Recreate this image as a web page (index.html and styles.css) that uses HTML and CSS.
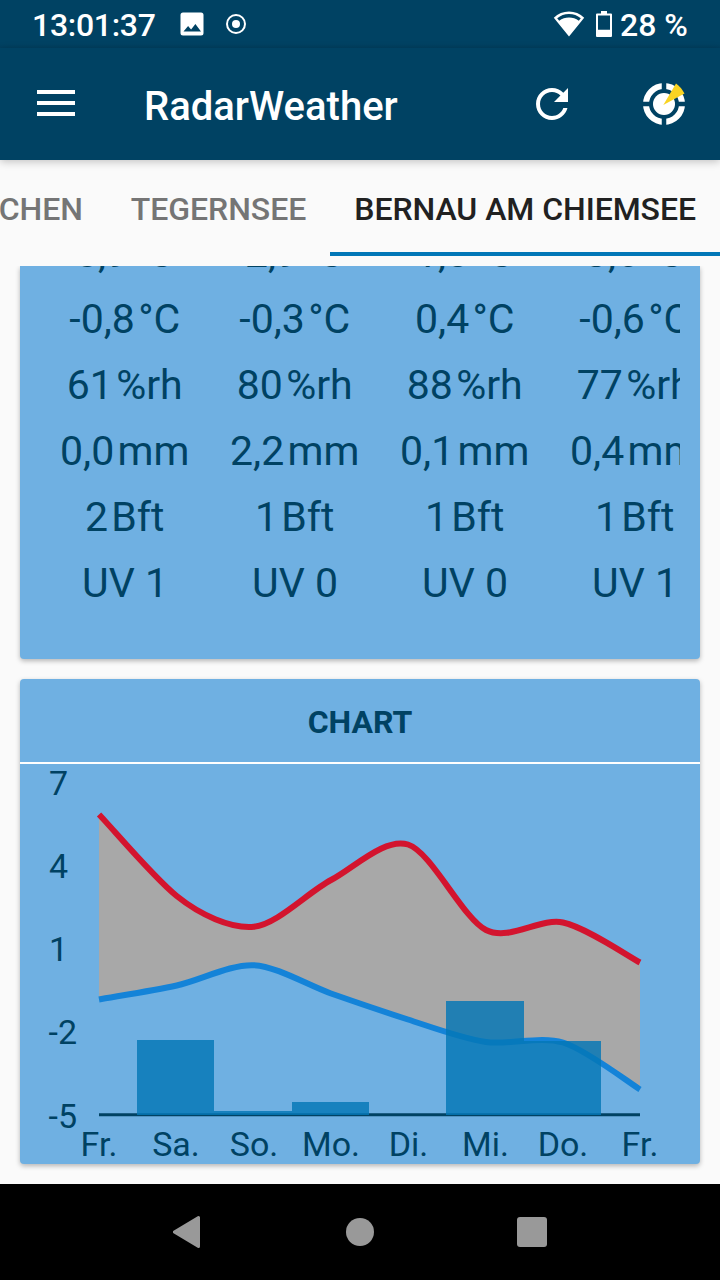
FILE: index.html
```html
<!DOCTYPE html>
<html lang="de">
<head>
<meta charset="utf-8">
<title>RadarWeather</title>
<link rel="stylesheet" href="styles.css">
</head>
<body>
<div class="screen">
  <header class="statusbar">
    <span class="clock">13:01:37</span>
    <svg class="status-image" width="24" height="24" viewBox="0 0 24 24"><path fill="#fff" fill-rule="evenodd" d="M3 .5h18A2.500 2.500 0 0 1 23.500 3v18a2.500 2.500 0 0 1-2.500 2.500H3A2.500 2.500 0 0 1 .5 21V3A2.500 2.500 0 0 1 3 .5zM3.500 19.500h17.500l-5.600-7.500-4.300 5.600-3-3.700z"/></svg>
    <svg class="status-record" width="22" height="22" viewBox="0 0 22 22"><circle cx="11" cy="11" r="9" fill="none" stroke="#fff" stroke-width="2"/><circle cx="11" cy="11" r="4" fill="#fff"/></svg>
    <svg class="status-wifi" width="32" height="26" viewBox="0 0 32 26"><path fill="#fff" fill-rule="evenodd" d="M16 25.500L.8 6.800C5 2.700 10.300.5 16 .5s11 2.200 15.200 6.300zM4.200 7.300l2 2.400a16.500 16.500 0 0 1 19.600 0l2-2.400a18.500 18.500 0 0 0-23.600 0z"/></svg>
    <svg class="status-battery" width="16" height="26" viewBox="0 0 16 26"><path fill="#fff" fill-rule="evenodd" d="M5 0h6v2.500h4a1 1 0 0 1 1 1V25a1 1 0 0 1-1 1H1a1 1 0 0 1-1-1V3.500a1 1 0 0 1 1-1h4zM2 4.600v14.200h12V4.600z"/></svg>
    <span class="percent">28 %</span>
  </header>
  <div class="appbar">
    <svg class="menu" width="38" height="28" viewBox="0 0 38 28"><path stroke="#fff" stroke-width="4" d="M0 3h38M0 14h38M0 25h38"/></svg>
    <h1 class="title">RadarWeather</h1>
    <svg class="refresh" width="32" height="32" viewBox="4 4 16 16"><path fill="#fff" d="M17.650 6.350C16.200 4.900 14.210 4 12 4c-4.420 0-7.990 3.580-7.990 8s3.570 8 7.990 8c3.730 0 6.840-2.550 7.730-6h-2.080c-.82 2.330-3.040 4-5.650 4-3.310 0-6-2.690-6-6s2.690-6 6-6c1.660 0 3.140.69 4.220 1.780L13 11h7V4l-2.350 2.350z"/></svg>
    <svg class="radar" width="42" height="42" viewBox="0 0 42 42"><circle cx="21" cy="21" r="11" fill="#fff"/><circle cx="21" cy="21" r="18" fill="none" stroke="#fff" stroke-width="6"/><path stroke="#004263" stroke-width="4.500" d="M21 0v9M21 33v9M0 21h9M33 21h9"/><path fill="#f9d423" d="M20.300 22L33 .5Q38 4 41.500 10.500z"/></svg>
  </div>
  <nav class="tabs">
    <span class="tab">MÜNCHEN</span>
    <span class="tab">TEGERNSEE</span>
    <span class="tab tab-active">BERNAU AM CHIEMSEE</span>
  </nav>
  <main class="content">
    <section class="card forecast">
      <div class="days">
        <div class="day"><span>5,9<i>°C</i></span><span>-0,8<i>°C</i></span><span>61<i>%rh</i></span><span>0,0<i>mm</i></span><span>2<i>Bft</i></span><span>UV 1</span></div>
        <div class="day"><span>2,9<i>°C</i></span><span>-0,3<i>°C</i></span><span>80<i>%rh</i></span><span>2,2<i>mm</i></span><span>1<i>Bft</i></span><span>UV 0</span></div>
        <div class="day"><span>1,8<i>°C</i></span><span>0,4<i>°C</i></span><span>88<i>%rh</i></span><span>0,1<i>mm</i></span><span>1<i>Bft</i></span><span>UV 0</span></div>
        <div class="day"><span>3,6<i>°C</i></span><span>-0,6<i>°C</i></span><span>77<i>%rh</i></span><span>0,4<i>mm</i></span><span>1<i>Bft</i></span><span>UV 1</span></div>
      </div>
    </section>
    <section class="card">
      <h2 class="card-title">CHART</h2>
      <svg class="chart" width="680" height="400" viewBox="20 764 680 400">
        <path class="band" d="M99 814.500C111 826.700 153.500 877.300 176.700 896C199.900 914.700 230.700 928.800 253.800 926.700C277 924.600 307.900 892.300 331 880C354.100 867.700 384.800 837.300 408 844.500C431.200 851.700 462.800 918.300 486 930C509.200 941.700 539.900 917.600 563 922.500C586.100 927.400 628.500 956.500 640 962.500L640 1089.500C628.500 1082.400 586.100 1049.600 563 1042.500C539.900 1035.400 509.200 1045.400 486 1042C462.800 1038.600 431.200 1027 408 1019.500C384.800 1012 354.100 1001.600 331 993.500C307.900 985.400 277 966.300 253.800 965.200C230.700 964.100 199.900 980.300 176.700 985.500C153.500 990.600 110.600 997.300 99 999.500z"/>
        <path class="high" d="M99 814.500C111 826.700 153.500 877.300 176.700 896C199.900 914.700 230.700 928.800 253.800 926.700C277 924.600 307.900 892.300 331 880C354.100 867.700 384.800 837.300 408 844.500C431.200 851.700 462.800 918.300 486 930C509.200 941.700 539.900 917.600 563 922.500C586.100 927.400 628.500 956.500 640 962.500"/>
        <path class="low" d="M99 999.500C110.600 997.300 153.500 990.600 176.700 985.500C199.900 980.300 230.700 964.100 253.800 965.200C277 966.300 307.900 985.400 331 993.500C354.100 1001.600 384.800 1012 408 1019.500C431.200 1027 462.800 1038.600 486 1042C509.200 1045.400 539.900 1035.400 563 1042.500C586.100 1049.600 628.500 1082.400 640 1089.500"/>
        <path class="axis" d="M99 1114.800H640"/>
        <path class="rain" d="M137 1115V1040H214V1111H292V1102H369V1115zM446 1115V1001H524V1041H601V1115z"/>
        <g class="labels">
          <text x="49" y="795">7</text><text x="49" y="878">4</text><text x="49" y="961">1</text><text x="48.500" y="1044">-2</text><text x="48.500" y="1128">-5</text>
          <g text-anchor="middle"><text x="99" y="1156">Fr.</text><text x="176" y="1156">Sa.</text><text x="254" y="1156">So.</text><text x="331" y="1156">Mo.</text><text x="408.500" y="1156">Di.</text><text x="485.500" y="1156">Mi.</text><text x="563" y="1156">Do.</text><text x="640" y="1156">Fr.</text></g>
        </g>
      </svg>
    </section>
  </main>
  <footer class="navbar">
    <svg width="30" height="34" viewBox="1 0 30 34"><path fill="#999" stroke="#999" stroke-width="3" stroke-linejoin="round" d="M2.300 17L26.500 2.500V31.500z"/></svg>
    <svg width="28" height="28" viewBox="0 0 28 28"><circle cx="14" cy="14" r="14" fill="#999"/></svg>
    <svg width="30" height="30" viewBox="0 0 30 30"><rect width="30" height="30" rx="3" fill="#999"/></svg>
  </footer>
</div>
</body>
</html>
```
FILE: styles.css
```css
* { box-sizing: border-box; }
body { margin: 0; font-family: Roboto, "Noto Sans", sans-serif; }
svg { display: block; flex: none; }
.screen { width: 720px; height: 1280px; display: flex; flex-direction: column; overflow: hidden; background: #fafafa; }
.statusbar { height: 48px; flex: none; display: flex; align-items: center; padding: 0 33px; background: linear-gradient(#004263 44px, #003e5e); color: #fff; font-size: 32px; font-weight: 500; line-height: 50px; white-space: nowrap; }
.clock { width: 147px; margin: 2px 1px 0 -1px; letter-spacing: -0.3px; }
.status-record { margin-left: 21px; }
.status-wifi { margin-left: auto; }
.status-battery { margin-left: 11px; }
.percent { width: 67px; margin: 2px 0 0 8px; }
.appbar { height: 112px; flex: none; display: flex; align-items: center; padding: 0 35px 0 37px; background: #004263; color: #fff; box-shadow: 0 2px 8px rgba(0,0,0,.22); }
.menu { margin-top: -2px; }
.title { margin: 6px 0 0 69px; font-size: 40px; font-weight: 500; line-height: 48px; }
.refresh { margin-left: auto; }
.radar { margin-left: 75px; }
.tabs { height: 96px; flex: none; display: flex; justify-content: flex-end; }
.tab { flex: none; padding: 0 24px; color: #757575; font-size: 32px; font-weight: 500; line-height: 98px; letter-spacing: -0.05px; white-space: nowrap; }
.tab-active { height: 96px; color: #212121; border-bottom: 4px solid #0177b7; }
.content { height: 918px; flex: none; margin-top: 10px; overflow: hidden; padding: 0 20px; display: flex; flex-direction: column; gap: 20px; }
.card { flex: none; background: #6fb0e2; border-radius: 4px; box-shadow: 0 2px 5px rgba(0,0,0,.28); color: #004263; overflow: hidden; }
.forecast { height: 393px; padding: 0 20px; border-radius: 0 0 4px 4px; }
.days { height: 393px; display: flex; overflow: hidden; }
.day { flex: none; width: 170px; margin-top: -46px; display: flex; flex-direction: column; text-align: center; font-size: 41px; line-height: 66px; white-space: nowrap; }
.day i { font-style: normal; margin-left: 3.3px; margin-right: .5px; }
.card-title { height: 85px; margin: 0; border-bottom: 2px solid #fff; font-size: 32px; line-height: 86px; font-weight: 700; text-align: center; }
.band { fill: #a8a8a8; }
.high, .low, .axis { fill: none; stroke-width: 6; }
.high { stroke: #d3142e; }
.low { stroke: #1483d8; }
.axis { stroke: #004263; stroke-width: 3; }
.rain { fill: #0476b6; fill-opacity: .82; }
.labels { fill: #004263; font-size: 34px; }
.navbar { height: 96px; flex: none; display: flex; align-items: center; justify-content: center; gap: 143px; background: #000; }
```
